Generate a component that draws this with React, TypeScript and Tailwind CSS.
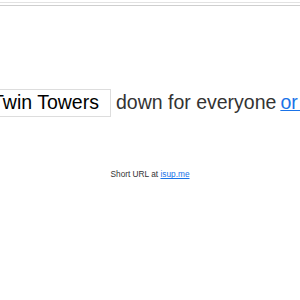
export default function App() {
  return (
    <div className="w-full h-[300px] bg-white overflow-hidden font-['Liberation_Sans',Arial,sans-serif] text-[#333]">
      <div className="pt-[2px]">
        <div className="h-[4px] border-t border-b border-t-[#e2e2e2] border-b-[#cfcfcf]" />
      </div>

      <div className="mt-[82px] flex items-center whitespace-nowrap ml-[-12px] text-[19.5px]">
        <div className="h-[28px] flex items-center border border-[#dddddd] pl-[3px] pr-[11px] text-black">
          Twin Towers
        </div>
        <span className="ml-[5px]">down for everyone</span>
        <a href="#" className="ml-[4px] text-[#1a73e8] underline">
          or just me?
        </a>
      </div>

      <p className="mt-[51px] text-center text-[8.3px]">
        Short URL at{' '}
        <a href="#" className="text-[#1a73e8] underline">
          isup.me
        </a>
      </p>
    </div>
  )
}
